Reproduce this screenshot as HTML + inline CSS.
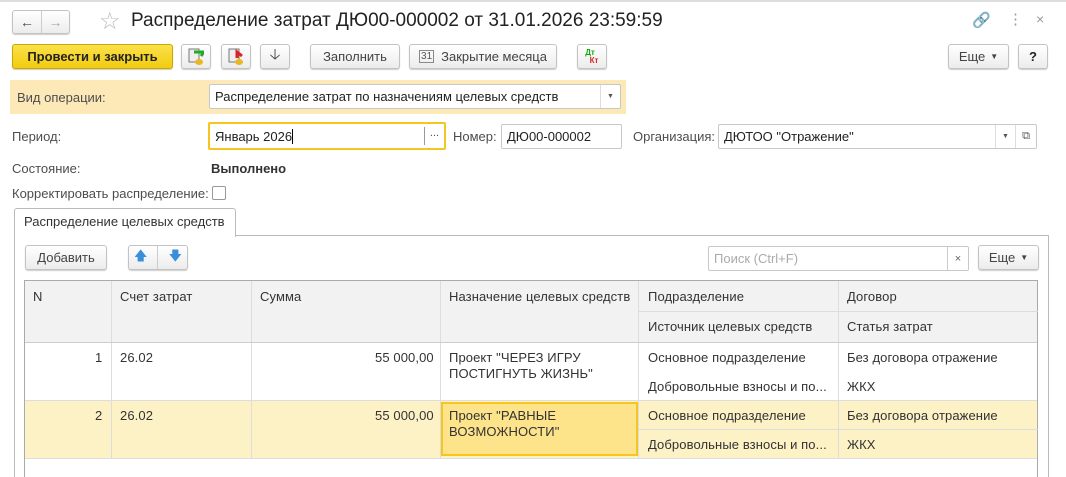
<!DOCTYPE html>
<html><head><meta charset="utf-8">
<style>
*{box-sizing:border-box;margin:0;padding:0}
html,body{width:1066px;height:477px;overflow:hidden}
body{background:#fff;font-family:"Liberation Sans",Arial,sans-serif;font-size:13px;color:#333;position:relative}
.a{position:absolute}
.btn{position:absolute;height:25px;border:1px solid #c3c3c3;border-radius:3px;background:linear-gradient(#fff,#ececec);box-shadow:0 1px 1px rgba(0,0,0,.2);display:flex;align-items:center;justify-content:center;color:#444;font-size:13px}
.lbl{position:absolute;color:#4d4d4d}
.inp{position:absolute;height:25px;border:1px solid #c8c8c8;border-radius:2px;background:#fff;display:flex;align-items:center;padding-left:5px;color:#222}
.vl{position:absolute;width:1px;background:#ddd}
.hl{position:absolute;height:1px;background:#ddd}
.t{position:absolute;color:#333;letter-spacing:0.1px}
</style></head><body>
<div class="a" style="left:0;top:0;width:1066px;height:2px;background:#ddd"></div>
<div class="btn" style="left:12px;top:10px;width:58px;height:24px;justify-content:space-between">
 <span style="width:29px;text-align:center;font-size:14px;color:#444;font-weight:bold">&#8592;</span><span style="width:1px;height:22px;background:#ccc"></span><span style="width:28px;text-align:center;font-size:14px;color:#aaa;font-weight:bold">&#8594;</span></div>
<div class="a" style="left:99px;top:7px;font-size:24px;color:#bbb">&#9734;</div>
<div class="a" style="left:131px;top:10px;font-size:19px;color:#222">Распределение затрат ДЮ00-000002 от 31.01.2026 23:59:59</div>
<div class="a" style="left:972px;top:11px;font-size:15px;color:#999">&#128279;</div>
<div class="a" style="left:1008px;top:10px;font-size:15px;color:#999">&#8942;</div>
<div class="a" style="left:1036px;top:11px;font-size:14px;color:#999">&#215;</div>
<div class="btn" style="left:12px;top:44px;width:161px;background:linear-gradient(#fbe14a,#f2cc0f);border-color:#c9a800;color:#222;font-weight:bold">Провести и закрыть</div>
<div class="btn" style="left:181px;top:44px;width:30px"><svg width="16" height="18"><rect x="1" y="1" width="10" height="13" fill="#eee" stroke="#777"/><path d="M6 4h10l-3 4" stroke="#2a2" stroke-width="3" fill="none"/><ellipse cx="11" cy="14" rx="4" ry="3" fill="#e8b820"/></svg></div>
<div class="btn" style="left:221px;top:44px;width:30px"><svg width="16" height="18"><rect x="1" y="1" width="10" height="13" fill="#eee" stroke="#777"/><path d="M9 10V4l5 4" stroke="#d22" stroke-width="3" fill="none"/><ellipse cx="11" cy="14" rx="4" ry="3" fill="#e8b820"/></svg></div>
<div class="btn" style="left:260px;top:44px;width:30px;font-size:15px">&#129123;</div>
<div class="btn" style="left:310px;top:44px;width:90px">Заполнить</div>
<div class="btn" style="left:409px;top:44px;width:148px"><span style="font-size:10px;border:1px solid #888;padding:0 1px;margin-right:7px;color:#555">31</span>Закрытие месяца</div>
<div class="btn" style="left:577px;top:44px;width:30px;flex-direction:column;font-size:8px;line-height:8px;font-weight:bold"><span style="color:#1a1;margin-left:-4px">Дт</span><span style="color:#d22;margin-left:4px">Кт</span></div>
<div class="btn" style="left:948px;top:44px;width:61px">Еще <span style="font-size:8px;margin-left:5px">&#9660;</span></div>
<div class="btn" style="left:1018px;top:44px;width:30px;color:#222;font-weight:bold">?</div>
<div class="a" style="left:10px;top:80px;width:616px;height:34px;background:#fde9b8"></div>
<div class="lbl" style="left:17px;top:90px">Вид операции:</div>
<div class="inp" style="left:209px;top:84px;width:412px">Распределение затрат по назначениям целевых средств<span style="position:absolute;right:0;top:0;width:20px;height:23px;border-left:1px solid #ddd;font-size:7px;display:flex;align-items:center;justify-content:center;color:#555">&#9660;</span></div>
<div class="lbl" style="left:12px;top:129px">Период:</div>
<div class="inp" style="left:208px;top:122px;width:238px;height:28px;border:2px solid #f6c61e">Январь 2026<span style="display:inline-block;width:1px;height:15px;background:#000"></span><span style="position:absolute;right:0;top:3px;width:20px;height:18px;border-left:1px solid #999;font-size:11px;text-align:center;color:#555">...</span></div>
<div class="lbl" style="left:453px;top:129px">Номер:</div>
<div class="inp" style="left:501px;top:124px;width:121px">ДЮ00-000002</div>
<div class="lbl" style="left:633px;top:129px">Организация:</div>
<div class="inp" style="left:718px;top:124px;width:319px">ДЮТОО "Отражение"<span style="position:absolute;right:21px;top:0;width:20px;height:23px;border-left:1px solid #ddd;font-size:7px;display:flex;align-items:center;justify-content:center;color:#555">&#9660;</span><span style="position:absolute;right:0;top:0;width:21px;height:23px;border-left:1px solid #ddd;font-size:11px;display:flex;align-items:center;justify-content:center;color:#555">&#10697;</span></div>
<div class="lbl" style="left:12px;top:161px">Состояние:</div>
<div class="a" style="left:211px;top:161px;font-weight:bold;color:#333">Выполнено</div>
<div class="lbl" style="left:12px;top:186px">Корректировать распределение:</div>
<div class="a" style="left:212px;top:186px;width:14px;height:14px;border:1px solid #999;border-radius:2px"></div>
<div class="a" style="left:14px;top:235px;width:1035px;height:260px;border:1px solid #bbb"></div>
<div class="a" style="left:14px;top:208px;width:222px;height:29px;border:1px solid #bbb;border-bottom:none;border-radius:3px 3px 0 0;background:#fff"></div>
<div class="a" style="left:24px;top:214px;color:#333">Распределение целевых средств</div>
<div class="btn" style="left:25px;top:245px;width:82px">Добавить</div>
<div class="btn" style="left:128px;top:245px;width:60px;justify-content:space-around;color:#3b8ed8;font-size:13px"><span>&#129093;</span><span style="width:1px;height:23px;background:#ccc"></span><span>&#129095;</span></div>
<div class="inp" style="left:708px;top:246px;width:261px;height:25px;color:#aaa">Поиск (Ctrl+F)<span style="position:absolute;right:0;top:0;width:21px;height:23px;border-left:1px solid #ccc;display:flex;align-items:center;justify-content:center;color:#666;font-size:11px">&#215;</span></div>
<div class="btn" style="left:978px;top:245px;width:61px">Еще <span style="font-size:8px;margin-left:5px">&#9660;</span></div>
<div class="a" style="left:24px;top:280px;width:1014px;height:220px;border:1px solid #aaa;border-bottom:none"></div>
<div class="a" style="left:25px;top:281px;width:1012px;height:61px;background:#f2f2f2"></div>
<div class="a" style="left:25px;top:400px;width:1012px;height:58px;background:#fdf1c6"></div>
<div class="a" style="left:441px;top:402px;width:197px;height:54px;background:#fde38a;border:2px solid #f6c61e"></div>
<div class="vl" style="left:111px;top:281px;height:177px"></div>
<div class="vl" style="left:251px;top:281px;height:177px"></div>
<div class="vl" style="left:440px;top:281px;height:177px"></div>
<div class="vl" style="left:638px;top:281px;height:177px"></div>
<div class="vl" style="left:838px;top:281px;height:177px"></div>
<div class="hl" style="left:638px;top:311px;width:400px"></div>
<div class="hl" style="left:25px;top:342px;width:1012px;background:#ccc"></div>
<div class="hl" style="left:25px;top:400px;width:1012px"></div>
<div class="hl" style="left:25px;top:458px;width:1012px"></div>
<div class="hl" style="left:638px;top:429px;width:400px"></div>
<div class="t" style="left:33px;top:289px">N</div>
<div class="t" style="left:120px;top:289px">Счет затрат</div>
<div class="t" style="left:260px;top:289px">Сумма</div>
<div class="t" style="left:449px;top:289px">Назначение целевых средств</div>
<div class="t" style="left:648px;top:289px">Подразделение</div>
<div class="t" style="left:847px;top:289px">Договор</div>
<div class="t" style="left:648px;top:319px">Источник целевых средств</div>
<div class="t" style="left:847px;top:319px">Статья затрат</div>
<div class="t" style="left:95px;top:350px">1</div>
<div class="t" style="left:120px;top:350px">26.02</div>
<div class="t" style="left:375px;top:350px">55 000,00</div>
<div class="t" style="left:449px;top:350px;line-height:16px">Проект "ЧЕРЕЗ ИГРУ<br>ПОСТИГНУТЬ ЖИЗНЬ"</div>
<div class="t" style="left:648px;top:350px">Основное подразделение</div>
<div class="t" style="left:847px;top:350px">Без договора отражение</div>
<div class="t" style="left:648px;top:379px">Добровольные взносы и по...</div>
<div class="t" style="left:847px;top:379px">ЖКХ</div>
<div class="t" style="left:95px;top:408px">2</div>
<div class="t" style="left:120px;top:408px">26.02</div>
<div class="t" style="left:375px;top:408px">55 000,00</div>
<div class="t" style="left:449px;top:408px;line-height:16px">Проект "РАВНЫЕ<br>ВОЗМОЖНОСТИ"</div>
<div class="t" style="left:648px;top:408px">Основное подразделение</div>
<div class="t" style="left:847px;top:408px">Без договора отражение</div>
<div class="t" style="left:648px;top:437px">Добровольные взносы и по...</div>
<div class="t" style="left:847px;top:437px">ЖКХ</div>
</body></html>
